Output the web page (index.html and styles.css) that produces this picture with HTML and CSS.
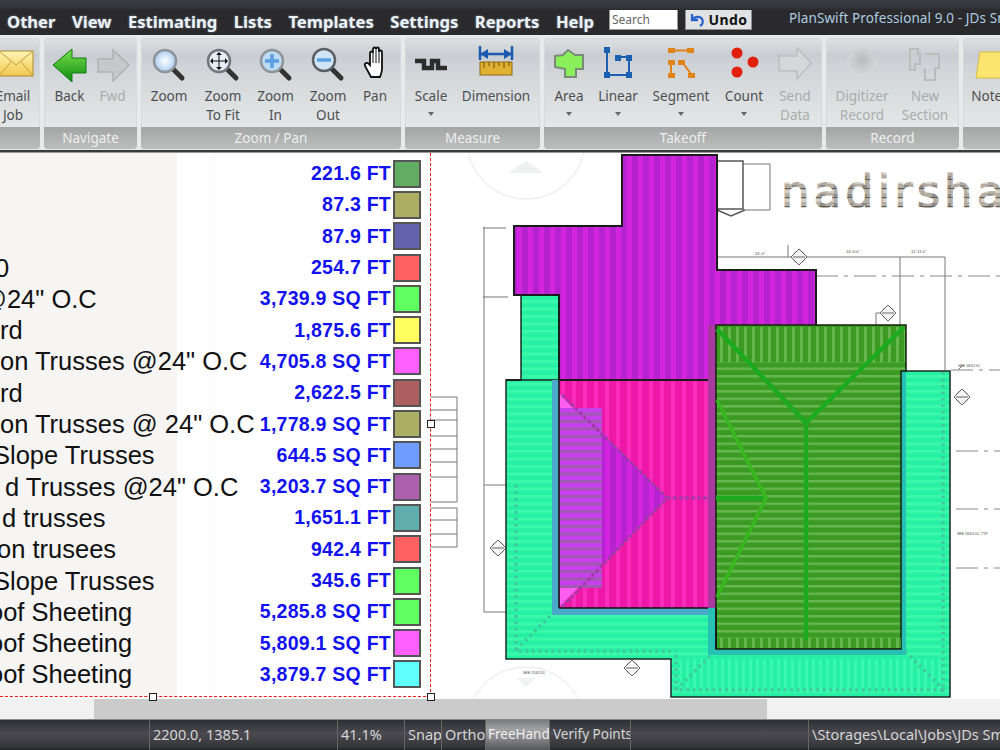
FILE: index.html
```html
<!DOCTYPE html>
<html lang="en">
<head>
<meta charset="utf-8">
<title>PlanSwift Professional 9.0</title>
<link rel="stylesheet" href="styles.css">
</head>
<body>
<div class="app">
  <div class="titlebar"></div>
  <header class="menubar">
    <nav class="menu">
      <span>Other</span><span>View</span><span>Estimating</span><span>Lists</span><span>Templates</span><span>Settings</span><span>Reports</span><span>Help</span>
    </nav>
    <div class="search">Search</div>
    <div class="undo">
      <svg width="16" height="16" viewBox="0 0 16 16"><path d="M3 2v6h6M3.5 7.500C6 4 12 4 13.500 8c.8 2.500-.5 5-2.500 6" fill="none" stroke="#2a62c8" stroke-width="2.300"/></svg>
      <span>Undo</span>
    </div>
    <div class="wintitle">PlanSwift Professional 9.0 - JDs Smith</div>
  </header>

  <section class="ribbon">
    <div class="group g-job">
      <div class="btns">
        <div class="btn w54"><svg class="ico" width="44" height="40" viewBox="0 0 44 40"><defs><linearGradient id="env" x1="0" y1="0" x2="0" y2="1"><stop offset="0" stop-color="#fff4b0"/><stop offset="1" stop-color="#f0c850"/></linearGradient></defs><rect x="8" y="5" width="34" height="25" fill="url(#env)" stroke="#b08a30"/><path d="M8 5l17 14L42 5M8 30l12-14M42 30L30 16" fill="none" stroke="#c49a3a"/></svg><span>Email<br>Job</span></div>
      </div>
      <div class="gname"></div>
    </div>
    <div class="group g-nav">
      <div class="btns">
        <div class="btn w43"><svg class="ico" width="36" height="40" viewBox="0 0 36 40"><defs><linearGradient id="grn" x1="0" y1="0" x2="0" y2="1"><stop offset="0" stop-color="#7be04a"/><stop offset="1" stop-color="#0d8a12"/></linearGradient></defs><path d="M1 19L20 3v9h14v15H20v9z" fill="url(#grn)" stroke="#0e7a14"/></svg><span>Back</span></div>
        <div class="btn w43 off"><svg class="ico" width="36" height="40" viewBox="0 0 36 40"><path d="M34 19L18 4v9H3v13h15v9z" fill="#c6c9ca" stroke="#b0b3b4" stroke-width="1.500"/></svg><span>Fwd</span></div>
      </div>
      <div class="gname">Navigate</div>
    </div>
    <div class="group g-zoom">
      <div class="btns">
        <div class="btn w56"><svg class="ico" width="36" height="40" viewBox="0 0 36 40"><defs><radialGradient id="lens"><stop offset="0" stop-color="#fff"/><stop offset="1" stop-color="#a9cdf0"/></radialGradient></defs><path d="M21 22l10 10" stroke="#333" stroke-width="5" stroke-linecap="round"/><circle cx="14" cy="15" r="11" fill="url(#lens)" stroke="#8e9499" stroke-width="2.500"/></svg><span>Zoom</span></div>
        <div class="btn w52"><svg class="ico" width="36" height="40" viewBox="0 0 36 40"><path d="M21 22l10 10" stroke="#333" stroke-width="5" stroke-linecap="round"/><circle cx="14" cy="15" r="11" fill="#e6eef8" stroke="#70767c" stroke-width="2.500"/><path d="M14 7v16M6 15h16" stroke="#111"/><path d="M14 6l-3 3h6zM14 24l-3-3h6zM5 15l3-3v6zM23 15l-3-3v6z" fill="#111"/></svg><span>Zoom<br>To Fit</span></div>
        <div class="btn w53"><svg class="ico" width="36" height="40" viewBox="0 0 36 40"><path d="M21 22l10 10" stroke="#333" stroke-width="5" stroke-linecap="round"/><circle cx="14" cy="15" r="11" fill="#bcdcf6" stroke="#8e9499" stroke-width="2.500"/><path d="M14 8v14M7 15h14" stroke="#5aa0e0" stroke-width="3.500"/></svg><span>Zoom<br>In</span></div>
        <div class="btn w52"><svg class="ico" width="36" height="40" viewBox="0 0 36 40"><path d="M21 22l10 10" stroke="#333" stroke-width="5" stroke-linecap="round"/><circle cx="14" cy="14" r="11" fill="#cfe4f6" stroke="#5a6066" stroke-width="2.500"/><path d="M7 14h14" stroke="#5aa0e0" stroke-width="3.500"/></svg><span>Zoom<br>Out</span></div>
        <div class="btn w42"><svg class="ico" width="30" height="40" viewBox="0 0 30 40"><path d="M11 31L5 20c-1-3 2-4 4-2l1 1V7c0-2 3-2 3 0V3c0-2 3-2 3 0v0c0-2 3-2 3 0v3c0-2 3-2 3 0v17c0 3-1 5-2 8z" fill="#fff" stroke="#111" stroke-width="1.800"/><path d="M13 7v10M16 3v14M19 3v14" stroke="#111"/></svg><span>Pan</span></div>
      </div>
      <div class="gname">Zoom / Pan</div>
    </div>
    <div class="group g-measure">
      <div class="btns">
        <div class="btn w52"><svg class="ico" width="36" height="40" viewBox="0 0 36 40"><path d="M2 15h9v7h8v-7h6v7h9" fill="none" stroke="#2c2c2c" stroke-width="4.500"/></svg><span>Scale</span><i class="caret"></i></div>
        <div class="btn w78"><svg class="ico" width="38" height="40" viewBox="0 0 38 40"><rect x="3" y="16" width="32" height="13" fill="#e2b030" stroke="#8a6a18"/><path d="M7 16v6M12 16v4M17 16v6M22 16v4M27 16v6M32 16v4" stroke="#6a5010"/><path d="M3 0v14M35 0v14M3 8h32" stroke="#1a5ab0" stroke-width="2.500"/><path d="M3 8l8-5v10zM35 8l-8-5v10z" fill="#1a5ab0"/></svg><span>Dimension</span></div>
      </div>
      <div class="gname">Measure</div>
    </div>
    <div class="group g-takeoff">
      <div class="btns">
        <div class="btn w50"><svg class="ico" width="32" height="40" viewBox="0 0 32 40"><path d="M2 10l8-1 5-5 7 5h8v14h-7v8H12v-8l-10-2z" fill="#8af05a" stroke="#7a8a78" stroke-width="2"/></svg><span>Area</span><i class="caret"></i></div>
        <div class="btn w48"><svg class="ico" width="32" height="40" viewBox="0 0 32 40"><path d="M5 3v26h22V11H14" fill="none" stroke="#1a5fb0" stroke-width="2"/><g fill="#1a5fb0"><rect x="2" y="1" width="6" height="6"/><rect x="2" y="26" width="6" height="6"/><rect x="24" y="26" width="6" height="6"/><rect x="24" y="9" width="6" height="6"/><rect x="13" y="9" width="6" height="6"/></g></svg><span>Linear</span><i class="caret"></i></div>
        <div class="btn w78"><svg class="ico" width="30" height="40" viewBox="0 0 30 40"><g fill="#e08418"><rect x="2" y="2" width="7" height="5"/><rect x="21" y="2" width="7" height="5"/><rect x="2" y="14" width="7" height="5"/><rect x="2" y="27" width="7" height="5"/><rect x="12" y="14" width="7" height="5"/><rect x="22" y="27" width="7" height="5"/></g><path d="M9 4.500h12M5 19v8M17 17l8 11" stroke="#e08418" stroke-width="2"/></svg><span>Segment</span><i class="caret"></i></div>
        <div class="btn w48"><svg class="ico" width="32" height="40" viewBox="0 0 32 40"><g fill="#e0200c"><circle cx="9" cy="7" r="5.500"/><circle cx="9" cy="26" r="5.500"/><circle cx="25" cy="16" r="5.500"/></g></svg><span>Count</span><i class="caret"></i></div>
        <div class="btn w54 off"><svg class="ico" width="36" height="40" viewBox="0 0 36 40"><path d="M34 17L20 2v8H2v15h18v8z" fill="#d5d8d9" stroke="#bcbfc0" stroke-width="1.500"/></svg><span>Send<br>Data</span></div>
      </div>
      <div class="gname">Takeoff</div>
    </div>
    <div class="group g-record">
      <div class="btns">
        <div class="btn w72 off"><svg class="ico" width="36" height="40" viewBox="0 0 36 40"><defs><radialGradient id="ball" cy="0.400"><stop offset="0" stop-color="#b8bbbd"/><stop offset="1" stop-color="#d4d7d8"/></radialGradient></defs><circle cx="18" cy="17" r="15" fill="url(#ball)"/></svg><span>Digitizer<br>Record</span></div>
        <div class="btn w54 off"><svg class="ico" width="36" height="40" viewBox="0 0 36 40"><path d="M3 3h8v5h2v10h-5v6H3zM18 8h14v14h-4v12H18V24h-2" fill="none" stroke="#b9bcbd" stroke-width="2"/></svg><span>New<br>Section</span></div>
      </div>
      <div class="gname">Record</div>
    </div>
    <div class="group g-note">
      <div class="btns">
        <div class="btn w54"><svg class="ico" width="36" height="40" viewBox="0 0 36 40"><path d="M8 6h30v21l-6 5H4z" fill="#fbe56e" stroke="#d6bc44"/></svg><span>Notes</span></div>
      </div>
      <div class="gname"></div>
    </div>
  </section>
  <div class="divider"></div>

  <main class="canvas">
    <section class="legend">
      <div class="row"><div class="name"></div><div class="val">221.6 FT</div><div class="sw c1"></div></div>
      <div class="row"><div class="name"></div><div class="val">87.3 FT</div><div class="sw c2"></div></div>
      <div class="row"><div class="name"></div><div class="val">87.9 FT</div><div class="sw c3"></div></div>
      <div class="row"><div class="name n5">0</div><div class="val">254.7 FT</div><div class="sw c4"></div></div>
      <div class="row"><div class="name n19">@24" O.C</div><div class="val">3,739.9 SQ FT</div><div class="sw c5"></div></div>
      <div class="row"><div class="name n0">rd</div><div class="val">1,875.6 FT</div><div class="sw c6"></div></div>
      <div class="row"><div class="name n0">on Trusses @24" O.C</div><div class="val">4,705.8 SQ FT</div><div class="sw c7"></div></div>
      <div class="row"><div class="name n0">rd</div><div class="val">2,622.5 FT</div><div class="sw c8"></div></div>
      <div class="row"><div class="name n0">on Trusses @ 24" O.C</div><div class="val">1,778.9 SQ FT</div><div class="sw c2"></div></div>
      <div class="row"><div class="name n7">Slope Trusses</div><div class="val">644.5 SQ FT</div><div class="sw c9"></div></div>
      <div class="row"><div class="name p5">d Trusses @24" O.C</div><div class="val">3,203.7 SQ FT</div><div class="sw c10"></div></div>
      <div class="row"><div class="name p2">d trusses</div><div class="val">1,651.1 FT</div><div class="sw c11"></div></div>
      <div class="row"><div class="name n3">on trusees</div><div class="val">942.4 FT</div><div class="sw c4"></div></div>
      <div class="row"><div class="name n7">Slope Trusses</div><div class="val">345.6 FT</div><div class="sw c5"></div></div>
      <div class="row"><div class="name n11">oof Sheeting</div><div class="val">5,285.8 SQ FT</div><div class="sw c5"></div></div>
      <div class="row"><div class="name n11">oof Sheeting</div><div class="val">5,809.1 SQ FT</div><div class="sw c7"></div></div>
      <div class="row"><div class="name n11">oof Sheeting</div><div class="val">3,879.7 SQ FT</div><div class="sw c12"></div></div>
      <i class="handle h-right"></i>
      <i class="handle h-bottom"></i>
      <i class="handle h-corner"></i>
    </section>

    <svg class="plan" viewBox="431 153 569 546" width="569" height="546">
      <defs>
        <pattern id="pPurple" width="11" height="11" patternUnits="userSpaceOnUse"><rect width="11" height="11" fill="#b622cf"/><rect width="5" height="11" fill="#d324df"/></pattern>
        <pattern id="pPink" width="11" height="11" patternUnits="userSpaceOnUse"><rect width="11" height="11" fill="#ee18a6"/><rect width="4" height="11" fill="#fb2cbc"/></pattern>
        <pattern id="pTeal" width="7.500" height="7.500" patternUnits="userSpaceOnUse"><rect width="7.500" height="7.500" fill="#26f0a4"/><rect width="7.500" height="3" fill="#3cf8aa"/></pattern>
        <pattern id="pTealV" width="7" height="7" patternUnits="userSpaceOnUse"><rect width="7" height="7" fill="#26f0a4"/><rect width="3" height="7" fill="#3af8ae"/></pattern>
        <pattern id="pGreen" width="7.500" height="7.500" patternUnits="userSpaceOnUse"><rect width="7.500" height="7.500" fill="#3a9a22"/><rect width="7.500" height="2.500" fill="#66b652"/></pattern>
        <pattern id="pGreenV" width="8" height="8" patternUnits="userSpaceOnUse"><rect width="8" height="8" fill="#3a9a22"/><rect width="3" height="8" fill="#66b652"/></pattern>
        <pattern id="pHatch" width="7.500" height="7.500" patternUnits="userSpaceOnUse"><rect width="7.500" height="7.500" fill="#c840ee"/><rect width="7.500" height="3" fill="#a05ab0"/></pattern>
        <pattern id="pStone" width="14" height="9" patternUnits="userSpaceOnUse"><rect width="14" height="9" fill="#b3aca2"/><rect x="1" y="1" width="7" height="3" fill="#d5d0c6"/><rect x="8" y="5" width="5" height="3" fill="#8c8a86"/><rect y="8" width="14" height="1" fill="#5f5e5a"/></pattern>
        <g id="tag"><circle r="6"/><path d="M0-8l8 8-8 8-8-8zM-6 0h12"/></g>
      </defs>

      <!-- faint watermark -->
      <g fill="none" stroke="#eef0ef" stroke-width="1.500">
        <circle cx="526" cy="140" r="59"/>
        <circle cx="526" cy="726" r="59"/>
      </g>
      <path d="M508 173l18-12 18 12z" fill="#eef1f0"/>
      <path d="M516 678h20l-10 9z" fill="#f1f3f2"/>

      <!-- schedule tables -->
      <path class="ln" d="M431 397h26v105h-26M431 410h26M431 420h26M431 436h26M431 449h26M431 462h26M431 477h26M431 508h26v39h-26M431 520h26M431 534h26"/>

      <!-- dimensions -->
      <path class="ln" d="M484 227v385M483 228h23M483 297h25M484 485h22M484 612h22M717 257h228M900 257v68M945 257v113"/>
      <path class="ln2" d="M717 161h26v48h-26M717 210l14 6 14-6"/>
      <path class="ln" d="M770 164v46M743 164h27M743 210h27M788 257v-12M876 325v-12h6M955 397h6M958 370l5-5"/>
      <path class="dash" d="M816 276h184M951 370h49M956 451h44M956 509h44M956 568h44"/>
      <text class="tiny" x="755" y="255" font-size="4">24'-0"</text>
      <text class="tiny" x="846" y="253" font-size="4">24'-0⅝"</text>
      <text class="tiny" x="911" y="253" font-size="4">11'-11⅝"</text>
      <text class="tiny" x="958" y="367" font-size="3.500">SEE 16/S2.01</text>
      <text class="tiny" x="957" y="535" font-size="3.500">SEE 16/S2.01, TYP.</text>
      <text class="tiny" x="523" y="674" font-size="3.500">SEE 15/S2.01</text>
      <g class="tag">
        <use href="#tag" x="799" y="257"/><use href="#tag" x="632" y="668"/><use href="#tag" x="498" y="548"/><use href="#tag" x="888" y="313"/><use href="#tag" x="962" y="397"/>
      </g>

      <text class="brand" x="781" y="207">nadirsha</text>

      <!-- teal body -->
      <path d="M521 295h39v85h-54v279h165v38h279V371H901V649H716V608H559V380h-38z" fill="url(#pTeal)" stroke="#1c2a26" stroke-width="1.500"/>
      <rect x="680" y="659" width="262" height="32" fill="url(#pTealV)"/>
      <path d="M708 608h8v41h185V371h5v284H708z" fill="#28c0b4"/>
      <path d="M552 380h7v228h149v7H552z" fill="#4aa8c8"/>
      <path class="dots" d="M516 485V651h160M676 655V690h268M943 372V692M516 650l36-36M676 690l36-36M944 690l-38-38"/>

      <!-- purple -->
      <path d="M622 155h95v115h99v57H716v53H559V295h-45V226h108z" fill="url(#pPurple)" stroke="#1a1a1a" stroke-width="2"/>
      <rect x="708" y="325" width="8" height="283" fill="#a93ba0"/>

      <!-- pink -->
      <rect x="559" y="381" width="149" height="227" fill="url(#pPink)"/>
      <rect x="560" y="408" width="42" height="180" fill="url(#pHatch)"/>
      <path d="M560 394l13 14h-13zM560 606v-18h18z" fill="#ff5cf0"/>
      <path d="M602 432l65 66-65 67z" fill="url(#pPurple)"/>
      <path d="M562 395l105 103-105 109M667 498h44" fill="none" stroke="#a43aa8" stroke-width="3" stroke-dasharray="4 2"/>
      <path d="M559 608h149M559 381v227" stroke="#111" stroke-width="1.500"/>

      <!-- green -->
      <path d="M716 325h190v46h-5v278H716z" fill="url(#pGreen)" stroke="#15210f" stroke-width="1.500"/>
      <path d="M717 327h188v35H717zM717 638h184v10H717z" fill="url(#pGreenV)"/>
      <path d="M717 329l89 94 98-96M806 422v218M716 498h50" fill="none" stroke="#1eaa1e" stroke-width="4.500"/>
      <path d="M717 400l49 98-49 99" fill="none" stroke="#38b81e" stroke-width="3.500"/>

      <path d="M506 380h15M716 608v41" stroke="#111" stroke-width="1.500"/>
    </svg>
  </main>

  <div class="scrollbar"><div class="thumb"></div></div>

  <footer class="status">
    <div class="cell s0"></div>
    <div class="cell s1">2200.0, 1385.1</div>
    <div class="cell s2">41.1%</div>
    <div class="cell s3">Snap</div>
    <div class="cell s4">Ortho</div>
    <div class="cell s5 on">FreeHand</div>
    <div class="cell s6">Verify Points</div>
    <div class="cell s7"></div>
    <div class="cell s8">\Storages\Local\Jobs\JDs Smith</div>
  </footer>
</div>
</body>
</html>
```
FILE: styles.css
```css
* { box-sizing: border-box; }
html, body { margin: 0; padding: 0; height: 100%; overflow: hidden; background: #fff; }
body { font-family: "Noto Sans", "Liberation Sans", sans-serif; }
.app { width: 1000px; height: 750px; display: flex; flex-direction: column; overflow: hidden; }

.titlebar { height: 10px; flex: none; background: linear-gradient(#3a3c44, #34363d 70%, #2a2a2d); }

.menubar { height: 25px; flex: none; width: 1000px; background: #2a2a2c; display: flex; align-items: flex-start; padding-left: 7px; overflow: hidden; }
.menu { display: flex; flex: none; gap: 16.500px; color: #eaf2f6; font-weight: 700; font-size: 16.600px; line-height: 25px; text-shadow: 0 0 2px rgba(200,225,255,.6); margin-top: -1px; }
.search { flex: none; margin-left: 15px; width: 69px; height: 21px; margin-top: -1px; background: #fff; border: 1px solid #999; color: #666; font-size: 12px; line-height: 19px; padding-left: 2px; }
.undo { flex: none; margin-left: 7px; width: 67px; height: 21px; margin-top: -1px; background: #e0e2e4; border: 1px solid #8c8e90; display: flex; align-items: center; justify-content: center; gap: 3px; font-size: 14px; font-weight: 700; color: #111; letter-spacing: .4px; }
.wintitle { flex: none; margin-left: 37px; margin-top: -1px; font-size: 13.500px; line-height: 19px; color: #aecbe2; white-space: nowrap; letter-spacing: .1px; }

.ribbon { height: 115px; flex: none; background: #e8eaea; display: flex; gap: 4px; padding: 3px 0 1px; margin-left: -14px; width: 1040px; }
.group { height: 111px; border-radius: 4px; display: flex; flex-direction: column; overflow: hidden; background: linear-gradient(#dfe2e4 0, #c9ccd1 17px, #d3d6d9 35px, #e3e7e7 88px); box-shadow: inset 0 0 0 1px #d7dadb; flex: none; }
.g-job { width: 54px; }
.g-nav { width: 93px; }
.g-zoom { width: 260px; }
.g-measure { width: 135px; }
.g-takeoff { width: 278px; }
.g-record { width: 133px; }
.g-note { width: 60px; }
.btns { height: 89px; display: flex; }
.g-nav .btns { padding-left: 4px; }
.gname { height: 22px; background: linear-gradient(#a4a6a6, #bcbebd); color: #ecefef; font-size: 13.500px; line-height: 22px; text-align: center; }
.btn { position: relative; display: flex; flex-direction: column; align-items: center; color: #4c4f52; font-size: 13.500px; line-height: 19px; text-align: center; flex: none; padding-top: 8px; }
.btn .ico { display: block; height: 40px; margin-bottom: 1px; flex: none; }
.btn.off { color: #a8acae; }
.w42 { width: 42px; } .w43 { width: 43px; } .w48 { width: 48px; } .w50 { width: 50px; } .w52 { width: 52px; } .w53 { width: 53px; } .w54 { width: 54px; } .w56 { width: 56px; } .w72 { width: 72px; } .w78 { width: 78px; }
.caret { position: absolute; left: 50%; top: 74px; margin-left: -3px; border: 3px solid transparent; border-top: 4px solid #666; border-bottom: 0; }

.divider { height: 3px; flex: none; background: #3a3a3a; border-bottom: 1px solid #999; }

.canvas { height: 546px; display: flex; background: #fff; flex: none; }
.legend { position: relative; width: 431px; height: 544px; padding-top: 5px; flex: none; border-right: 1px dashed #f01818; border-bottom: 1px dashed #f01818; background: linear-gradient(90deg, #f6f5f4 177px, #fff 177px, #fff 214px, #f2f2f2 214px, #fff 215px); }
.row { height: 31.300px; display: flex; align-items: center; white-space: nowrap; }
.name { flex: 1; min-width: 0; font-family: "Liberation Sans", sans-serif; font-size: 25.500px; color: #111; line-height: 31px; padding-top: 1px; }
.n19 { text-indent: -19px; } .n11 { text-indent: -11px; } .n7 { text-indent: -7px; } .n5 { text-indent: -5px; } .n3 { text-indent: -3px; } .n0 { text-indent: 0; } .p2 { text-indent: 2px; } .p5 { text-indent: 5px; }
.val { font-family: "Liberation Sans", sans-serif; font-weight: 700; font-size: 19.500px; letter-spacing: .25px; color: #1212ee; margin-right: 2px; }
.sw { width: 28px; height: 28px; border: 2px solid #555; margin-right: 9px; flex: none; }
.c1 { background: #63ad63; } .c2 { background: #adad63; } .c3 { background: #6363ad; } .c4 { background: #ff6060; } .c5 { background: #60ff60; } .c6 { background: #ffff60; } .c7 { background: #ff60ff; } .c8 { background: #ad6060; } .c9 { background: #6f9cff; } .c10 { background: #ad60ad; } .c11 { background: #60adad; } .c12 { background: #60ffff; }
.handle { position: absolute; width: 8px; height: 8px; background: #fff; border: 1px solid #222; }
.h-right { right: -5px; top: 267px; }
.h-bottom { left: 149px; bottom: -5px; }
.h-corner { right: -5px; bottom: -5px; }

.plan { display: block; flex: none; }
.ln { fill: none; stroke: #777; stroke-width: 1; }
.ln2 { fill: none; stroke: #555; stroke-width: 1.500; }
.dash { fill: none; stroke: #888; stroke-width: 1; stroke-dasharray: 22 6 4 6; }
.dots { fill: none; stroke: #40c8a0; stroke-width: 3.500; stroke-dasharray: 2.500 4; }
.tiny { font-family: "Liberation Sans", sans-serif; fill: #444; }
.tag { fill: #f4f4f4; stroke: #666; stroke-width: 1; }
.brand { font-family: "DejaVu Sans", sans-serif; font-size: 45px; letter-spacing: 4px; fill: url(#pStone); stroke: url(#pStone); stroke-width: 1; }

.scrollbar { height: 20px; background: #f0f1f0; padding-left: 94px; flex: none; }
.thumb { width: 673px; height: 20px; background: #cbcbcb; }

.status { height: 31px; flex: none; display: flex; background: linear-gradient(#2e2f34, #4a4a50 45%, #35363a 90%, #222 100%); color: #d4d6d8; font-size: 14.500px; line-height: 29px; border-top: 1px solid #888; white-space: nowrap; }
.cell { border-right: 1px solid #666; overflow: hidden; padding-left: 3px; height: 30px; flex: none; }
.s0 { width: 150px; } .s1 { width: 188px; } .s2 { width: 67px; } .s3 { width: 37px; } .s4 { width: 44px; } .s5 { width: 64px; padding-left: 2px; font-size: 13.500px; } .s6 { width: 81px; font-size: 13.500px; } .s7 { width: 178px; } .s8 { width: 191px; border-right: 0; }
.on { background: linear-gradient(#777a7e, #a0a2a4 30%, #88898c 60%, #55565a); color: #f0f0f0; }
```
